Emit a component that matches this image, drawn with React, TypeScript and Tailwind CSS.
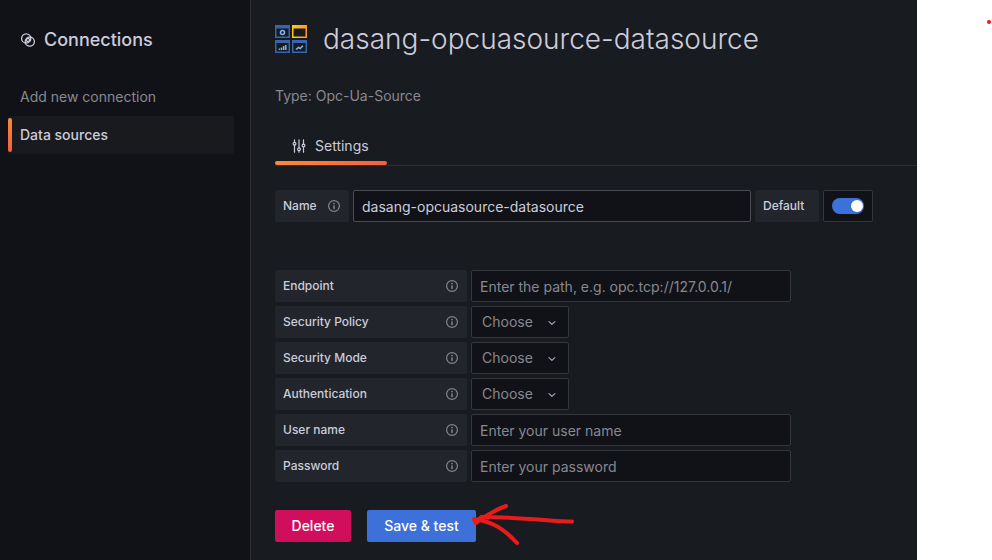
import React, { useState } from "react";

function InfoIcon() {
  return (
    <svg viewBox="0 0 14 14" className="h-3.5 w-3.5 shrink-0 text-[#85858f]" fill="none" stroke="currentColor" aria-hidden="true">
      <circle cx="7" cy="7" r="5.4" strokeWidth="1.2" />
      <path d="M7 7v2.4" strokeWidth="1.5" strokeLinecap="round" />
      <circle cx="7" cy="4.6" r="0.85" fill="currentColor" stroke="none" />
    </svg>
  );
}

function ConnectionsIcon() {
  return (
    <svg viewBox="0 0 16 16" className="h-4 w-4" fill="none" stroke="currentColor" strokeWidth="1.3" aria-hidden="true">
      <circle cx="6.2" cy="6.4" r="4.6" />
      <circle cx="9.8" cy="9.6" r="4.6" />
      <rect x="6.5" y="6.5" width="3" height="3" rx="0.8" transform="rotate(42 8 8)" />
    </svg>
  );
}

function SlidersIcon() {
  return (
    <svg viewBox="0 0 16 16" className="h-4 w-4" fill="none" stroke="currentColor" strokeWidth="1.2" strokeLinecap="round" aria-hidden="true">
      <path d="M3.5 1.8v2.6M3.5 7.2V14.2M8 1.8v8M8 12.8v1.4M12.5 1.8v4.4M12.5 9v5.2" />
      <circle cx="3.5" cy="5.8" r="1.4" />
      <circle cx="8" cy="11.3" r="1.4" />
      <circle cx="12.5" cy="7.6" r="1.4" />
    </svg>
  );
}

function SourceLogo() {
  return (
    <svg viewBox="0 0 32 28" className="h-7 w-8 shrink-0" fill="none" aria-hidden="true">
      <defs>
        <linearGradient id="panel" x1="0" y1="0" x2="1" y2="0">
          <stop offset="0" stopColor="#fccc0c" />
          <stop offset="1" stopColor="#ff9830" />
        </linearGradient>
      </defs>
      <path fill="#3865ab" fillRule="evenodd" d="M0 0h15v13H0zM1.5 3.5v8h12v-8zM0 15h15v13H0zM1.5 18v8.5h12V18zM17 15h15v13H17zM18.5 18v8.5h12V18z" />
      <path fill="url(#panel)" fillRule="evenodd" d="M17 0h15v13H17zM18.5 3.5v8h12v-8z" />
      <circle cx="7.5" cy="7.5" r="2" stroke="#84aff1" strokeWidth="1.6" />
      <path stroke="#84aff1" strokeWidth="1.5" d="M4.5 25v-1.5M6.6 25v-2.5M8.7 25v-4M10.8 25v-5" />
      <path stroke="#84aff1" strokeWidth="1.6" d="M21 24.5l2.5-2 1.7 1 2.6-2.8" />
    </svg>
  );
}

const field =
  "h-8 rounded-xs border border-[#35373c] bg-[#111217] px-2 text-sm text-[#ccccdc] placeholder-[#888891] outline-none";

function FieldLabel({ id, children }: { id: string; children: React.ReactNode }) {
  return (
    <label htmlFor={id} className="flex h-8 w-48 shrink-0 items-center justify-between rounded-xs bg-[#22252b] px-2 text-xs font-medium">
      {children}
      <InfoIcon />
    </label>
  );
}

function TextRow({ id, label, placeholder, type = "text" }: { id: string; label: string; placeholder: string; type?: string }) {
  return (
    <div className="flex gap-1">
      <FieldLabel id={id}>{label}</FieldLabel>
      <input id={id} type={type} placeholder={placeholder} className={`${field} w-80`} />
    </div>
  );
}

function SelectRow({ id, label }: { id: string; label: string }) {
  return (
    <div className="flex gap-1">
      <FieldLabel id={id}>{label}</FieldLabel>
      <div className="relative">
        <select id={id} className="h-8 w-[98px] appearance-none rounded-xs border border-[#35373c] bg-[#111217] pl-2.5 text-sm text-[#888891] outline-none">
          <option>Choose</option>
        </select>
        <svg viewBox="0 0 16 16" className="pointer-events-none absolute top-2 right-2 h-4 w-4 text-[#a0a0ad]" fill="none" stroke="currentColor" strokeWidth="1.3" strokeLinecap="round" strokeLinejoin="round" aria-hidden="true">
          <path d="M4 7.6l2.9 2.8 2.9-2.8" />
        </svg>
      </div>
    </div>
  );
}

export default function App() {
  const [name, setName] = useState("dasang-opcuasource-datasource");
  const [isDefault, setIsDefault] = useState(true);

  return (
    <div className="relative flex min-h-screen bg-white font-['Inter',sans-serif] text-[#ccccdc]">
      <aside className="w-[251px] shrink-0 border-r border-[#2d2f34] bg-[#111217] pt-7 pr-4 pl-2">
        <h2 className="flex items-center gap-2 pl-3 text-lg leading-6 font-medium">
          <ConnectionsIcon />
          Connections
        </h2>
        <nav className="mt-[26px] text-sm">
          <a href="#add" className="flex h-[38px] items-center pl-3 text-[#888891]">
            Add new connection
          </a>
          <a href="#sources" className="flex h-[38px] items-center rounded-xs bg-[#181a1d] font-medium">
            <span className="h-[34px] w-1 rounded-xs bg-linear-to-b from-[#ff8833] to-[#f55f3e]" />
            <span className="pl-2">Data sources</span>
          </a>
        </nav>
      </aside>

      <main className="min-w-0 flex-1 bg-[#181b1f] pl-6">
        <header className="flex items-center gap-4 pt-[22px]">
          <SourceLogo />
          <h1 className="text-[28px] leading-[34px] font-light">dasang-opcuasource-datasource</h1>
        </header>
        <p className="mt-[30px] text-sm leading-5 text-[#888891]">Type: Opc-Ua-Source</p>

        <div role="tablist" className="mt-6 flex border-b border-[#2d2f34]">
          <button role="tab" aria-selected="true" className="flex w-28 flex-col text-sm">
            <span className="flex h-[31px] items-center gap-2 px-4">
              <SlidersIcon />
              Settings
            </span>
            <span className="h-1 w-full rounded-xs bg-linear-to-r from-[#ff8833] to-[#f55f3e]" />
          </button>
        </div>

        <form onSubmit={(e) => e.preventDefault()}>
          <div className="mt-6 flex gap-1">
            <label htmlFor="name" className="flex h-8 w-[74px] shrink-0 items-center justify-between rounded-xs bg-[#22252b] px-2 text-xs font-medium">
              Name
              <InfoIcon />
            </label>
            <input id="name" value={name} onChange={(e) => setName(e.target.value)} className="h-8 w-[398px] rounded-xs border border-[#4a4c54] bg-[#111217] px-2 text-sm text-[#ccccdc] outline-none" />
            <label htmlFor="default" className="flex h-8 w-16 shrink-0 items-center rounded-xs bg-[#22252b] px-2 text-xs font-medium">
              Default
            </label>
            <div className="flex h-8 w-[50px] shrink-0 items-center justify-center rounded-xs border border-[#35373c] bg-[#111217]">
              <input
                id="default"
                type="checkbox"
                role="switch"
                checked={isDefault}
                onChange={(e) => setIsDefault(e.target.checked)}
                className="flex h-4 w-8 appearance-none items-center rounded-full bg-[#3a3c44] px-px before:h-3 before:w-3 before:rounded-full before:bg-white checked:justify-end checked:bg-[#3d71d9]"
              />
            </div>
          </div>

          <div className="mt-12 flex flex-col gap-1">
            <TextRow id="endpoint" label="Endpoint" placeholder="Enter the path, e.g. opc.tcp://127.0.0.1/" />
            <SelectRow id="policy" label="Security Policy" />
            <SelectRow id="mode" label="Security Mode" />
            <SelectRow id="auth" label="Authentication" />
            <TextRow id="user" label="User name" placeholder="Enter your user name" />
            <TextRow id="password" label="Password" placeholder="Enter your password" type="password" />
          </div>

          <div className="mt-7 flex gap-4 text-sm font-medium text-white">
            <button type="button" className="h-8 min-w-[76px] rounded-xs bg-[#d10e5c] px-4">
              Delete
            </button>
            <div className="relative">
              <button type="submit" className="h-8 min-w-[109px] rounded-xs bg-[#3d71d9] px-4">
                Save &amp; test
              </button>
              <svg viewBox="0 0 104 44" className="pointer-events-none absolute -top-2 left-[104px] h-11 w-[104px]" fill="none" stroke="#e81c1c" strokeWidth="4" strokeLinecap="round" strokeLinejoin="round" aria-hidden="true">
                <path d="M101 19.5C82 19.5 52 15 10 15L5 21" />
                <path d="M35 4C24 8 14 14 5 21L3 17" />
                <path d="M3 17C22 20 32 26 46 41" />
              </svg>
            </div>
          </div>
        </form>
      </main>

      <div className="w-[75px] shrink-0" />
      <span className="absolute top-5 right-px h-1 w-1 rounded-full bg-[#e81c1c]" />
    </div>
  );
}
